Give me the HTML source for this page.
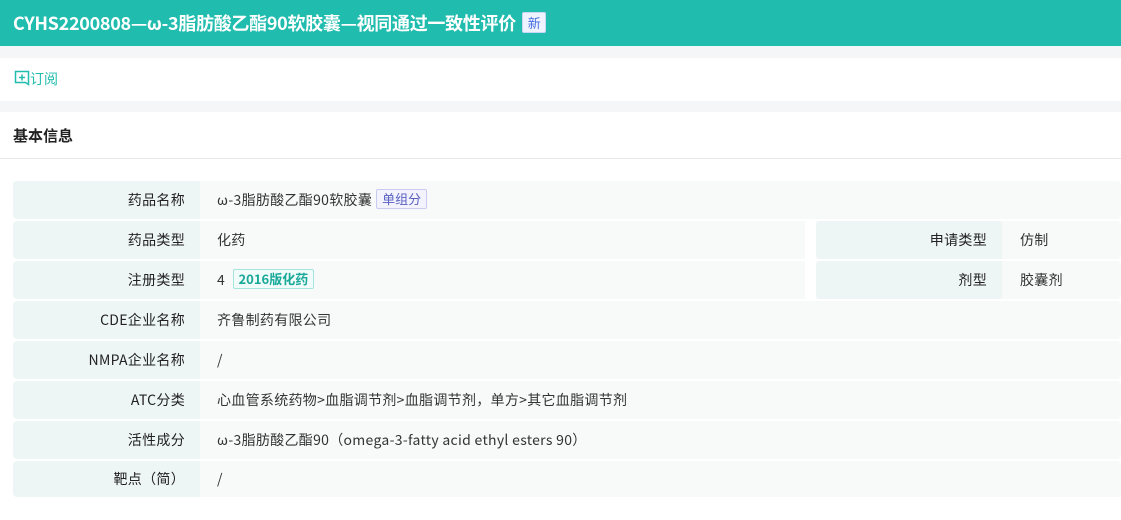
<!DOCTYPE html>
<html><head><meta charset="utf-8"><style>
*{margin:0;padding:0;box-sizing:border-box}
body{width:1121px;height:520px;background:#fff;font-family:"Noto Sans CJK SC","Liberation Sans",sans-serif;font-size:14px;color:#333;overflow:hidden;position:relative}
.hd{position:absolute;left:0;top:0;width:1121px;height:46px;background:#20bcae;color:#fff;font-size:18px;font-weight:bold;padding-left:13px;line-height:46px;letter-spacing:-0.3px}
.new{display:inline-block;background:#eef3ff;color:#4a6fe0;border:1px solid #c9d6f7;font-size:13px;font-weight:normal;line-height:19px;padding:0 5px;vertical-align:2px;margin-left:2px;border-radius:2px}
.g1{position:absolute;top:46px;left:0;width:1121px;height:12px;background:#f5f6f8}
.g2{position:absolute;top:101px;left:0;width:1121px;height:11px;background:#f5f6f8}
.sub{position:absolute;top:68px;left:14px;color:#20bcae;font-size:14px;line-height:22px}
.ttl{position:absolute;top:125px;left:13px;font-weight:bold;font-size:15px;color:#222;line-height:22px}
.ln{position:absolute;top:158px;left:0;width:1121px;height:1px;background:#e8e8e8}
.row{position:absolute;left:13px;width:1108px;height:38px;background:#f8fafa;border-radius:4px}
.lab{position:absolute;top:0;height:38px;width:187px;background:#eef5f5;border-radius:4px 0 0 4px;text-align:right;padding-right:15px;line-height:38px;color:#222;letter-spacing:0.3px}
.val{position:absolute;top:0;left:204px;line-height:38px;color:#333;letter-spacing:0.3px}
.tag{display:inline-block;font-size:13px;line-height:18px;padding:0 5px;border-radius:2px;margin-left:4px;vertical-align:1px;letter-spacing:0}
.t1{border:1px solid #c9ccf0;background:#f2f3fd;color:#5a5fc0}
.t2{border:1px solid #a6e5de;background:#f0fbfa;color:#18a999;font-weight:bold}
.gap{position:absolute;left:792px;top:0;width:11px;height:38px;background:#fff}
</style></head><body>
<div class="hd">CYHS2200808—ω-3脂肪酸乙酯90软胶囊—视同通过一致性评价 <span class="new">新</span></div>
<div class="g1"></div>
<div class="sub"><svg width="16" height="16" viewBox="0 0 16 16" style="vertical-align:-2px"><path d="M1.5 1.5h13v13l-3-2h-10z" fill="none" stroke="#20bcae" stroke-width="1.5"/><path d="M8 4.5v6M5 7.5h6" stroke="#20bcae" stroke-width="1.5"/></svg>订阅</div>
<div class="g2"></div>
<div class="ttl">基本信息</div>
<div class="ln"></div>

<div class="row" style="top:181px"><div class="lab">药品名称</div><div class="val">ω-3脂肪酸乙酯90软胶囊<span class="tag t1">单组分</span></div></div>
<div class="row" style="top:221px"><div class="lab">药品类型</div><div class="val">化药</div><div class="gap"></div><div class="lab" style="left:803px;width:186px">申请类型</div><div class="val" style="left:1007px">仿制</div></div>
<div class="row" style="top:261px"><div class="lab">注册类型</div><div class="val">4 <span class="tag t2">2016版化药</span></div><div class="gap"></div><div class="lab" style="left:803px;width:186px">剂型</div><div class="val" style="left:1007px">胶囊剂</div></div>
<div class="row" style="top:301px"><div class="lab">CDE企业名称</div><div class="val">齐鲁制药有限公司</div></div>
<div class="row" style="top:341px"><div class="lab">NMPA企业名称</div><div class="val">/</div></div>
<div class="row" style="top:381px"><div class="lab">ATC分类</div><div class="val">心血管系统药物&gt;血脂调节剂&gt;血脂调节剂，单方&gt;其它血脂调节剂</div></div>
<div class="row" style="top:421px"><div class="lab">活性成分</div><div class="val">ω-3脂肪酸乙酯90（omega-3-fatty acid ethyl esters 90）</div></div>
<div class="row" style="top:461px;height:36px"><div class="lab" style="height:36px;line-height:36px">靶点（简）</div><div class="val" style="line-height:36px">/</div></div>
</body></html>
